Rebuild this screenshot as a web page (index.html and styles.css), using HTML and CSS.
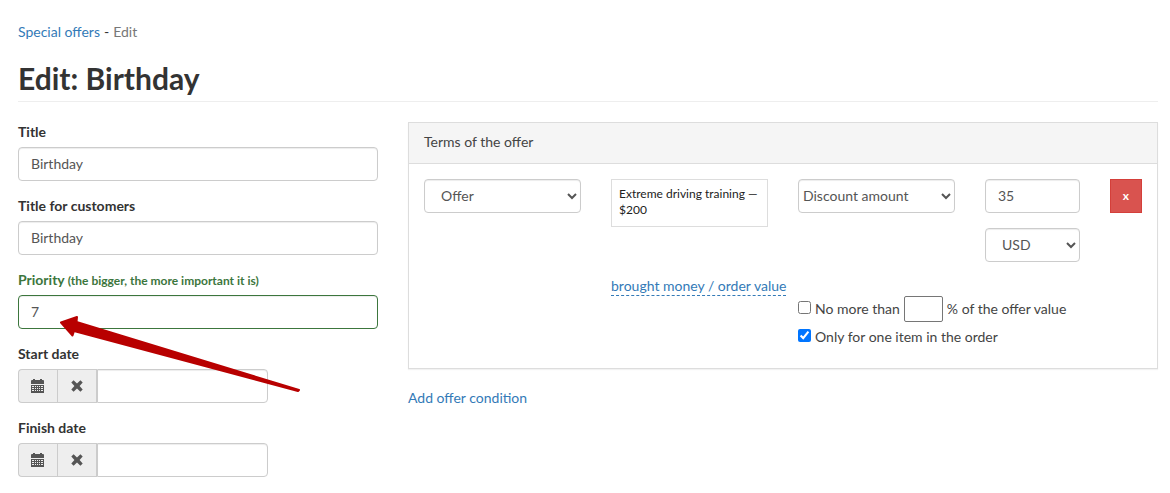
FILE: index.html
```html
<!DOCTYPE html>
<html lang="en">
<head>
  <meta charset="UTF-8">
  <meta name="viewport" content="width=device-width, initial-scale=1.0">
  <title>Edit: Birthday</title>
  <link rel="stylesheet" href="styles.css">
</head>
<body>
  <!-- Icons -->
  <svg class="sprite" xmlns="http://www.w3.org/2000/svg">
    <symbol id="icon-calendar" viewBox="0 0 14 14">
      <path d="M0 5V2q0-1 1-1h1V0h2v1h5V0h2v1h1q1 0 1 1v3z" />
      <path fill-rule="evenodd" d="M0 6h13v8H0zM1 7v1h2V7zM4 7v1h1V7zM6 7v1h1V7zM8 7v1h1V7zM10 7v1h2V7zM1 9v1h2V9zM4 9v1h1V9zM6 9v1h1V9zM8 9v1h1V9zM10 9v1h2V9zM1 11v1h2v-1zM4 11v1h1v-1zM6 11v1h1v-1zM8 11v1h1v-1zM10 11v1h2v-1z" />
    </symbol>
    <symbol id="icon-remove" viewBox="-1 -1 14 14">
      <path d="M2.6 0.3L6 3.4L9.4 0.3L11.7 2.6L8.6 6L11.7 9.4L9.4 11.7L6 8.6L2.6 11.7L0.3 9.4L3.4 6L0.3 2.6z" />
    </symbol>
  </svg>

  <nav class="breadcrumbs">
    <a href="#">Special offers</a>
    <span>-</span>
    <span class="current">Edit</span>
  </nav>
  <h1>Edit: Birthday</h1>

  <form class="row">
    <div class="col-4">
      <div class="form-group">
        <label for="title">Title</label>
        <input type="text" id="title" class="form-control" value="Birthday">
      </div>
      <div class="form-group">
        <label for="public-title">Title for customers</label>
        <input type="text" id="public-title" class="form-control" value="Birthday">
      </div>
      <div class="form-group has-success">
        <label for="priority">Priority <small>(the bigger, the more important it is)</small></label>
        <input type="text" id="priority" class="form-control" value="7">
        <svg class="pointer" viewBox="0 0 246 80" xmlns="http://www.w3.org/2000/svg">
          <path d="M2 8.5L18 3L17.5 8L240 76L239 77L15 17L13.5 21.5z" />
        </svg>
      </div>
      <div class="form-group">
        <label for="start-date">Start date</label>
        <div class="input-group">
          <button type="button" class="addon" aria-label="Pick start date"><svg class="icon"><use href="#icon-calendar" /></svg></button>
          <button type="button" class="addon" aria-label="Clear start date"><svg class="icon"><use href="#icon-remove" /></svg></button>
          <input type="text" id="start-date" class="form-control">
        </div>
      </div>
      <div class="form-group">
        <label for="finish-date">Finish date</label>
        <div class="input-group">
          <button type="button" class="addon" aria-label="Pick finish date"><svg class="icon"><use href="#icon-calendar" /></svg></button>
          <button type="button" class="addon" aria-label="Clear finish date"><svg class="icon"><use href="#icon-remove" /></svg></button>
          <input type="text" id="finish-date" class="form-control">
        </div>
      </div>
    </div>

    <div class="col-8">
      <div class="panel">
        <div class="panel-heading">Terms of the offer</div>
        <div class="panel-body">
          <div class="row">
            <div class="col-3">
              <select class="form-control" aria-label="Condition type">
                <option>Offer</option>
              </select>
            </div>
            <div class="col-3">
              <div class="offer-box">Extreme driving training — $200</div>
            </div>
            <div class="col-3">
              <select class="form-control select-flat" aria-label="Discount type">
                <option>Discount amount</option>
              </select>
            </div>
            <div class="col-2 stack">
              <input type="text" class="form-control" value="35" aria-label="Discount value">
              <select class="form-control" aria-label="Currency">
                <option>USD</option>
              </select>
            </div>
            <div class="col-1">
              <button type="button" class="btn-danger">x</button>
            </div>
          </div>
          <div class="row limits">
            <div class="col-3"></div>
            <div class="col-3">
              <a href="#" class="dashed">brought money / order value</a>
            </div>
            <div class="col-6">
              <div class="checks">
                <div class="check">
                  <input type="checkbox" id="limit">
                  <label for="limit">No more than</label>
                  <input type="text" id="percent" class="percent" aria-label="Percent">
                  <label for="percent">% of the offer value</label>
                </div>
                <div class="check">
                  <input type="checkbox" id="single" checked>
                  <label for="single">Only for one item in the order</label>
                </div>
              </div>
            </div>
          </div>
        </div>
      </div>
      <a href="#">Add offer condition</a>
    </div>
  </form>
</body>
</html>
```
FILE: styles.css
```css
* {
  box-sizing: border-box;
}

body {
  margin: 0;
  padding: 22px 12px 0 18px;
  font-family: Lato, "Liberation Sans", sans-serif;
  font-size: 14px;
  line-height: 20px;
  color: #333;
  background: #fff;
}

input,
select,
button {
  font-family: inherit;
  font-size: inherit;
  line-height: inherit;
}

a {
  color: #337ab7;
  text-decoration: none;
}

h1 {
  margin: 19px 0 20px;
  padding-bottom: 6px;
  border-bottom: 1px solid #eee;
  font-size: 30px;
  line-height: 34px;
  font-weight: 700;
}

.sprite {
  display: none;
}

.breadcrumbs {
  display: flex;
  gap: 4px;
}

.current {
  color: #777;
}

/* Grid */
.row {
  display: flex;
  margin: 0 -15px;
}

.row > div {
  padding: 0 15px;
  min-width: 0;
}

.col-1 { flex: 0 0 calc(100% / 12); }
.col-2 { flex: 0 0 calc(100% / 6); }
.col-3 { flex: 0 0 25%; }
.col-4 { flex: 0 0 calc(100% / 3); }
.col-6 { flex: 0 0 50%; }
.col-8 { flex: 0 0 calc(200% / 3); }

/* Form */
.form-group {
  position: relative;
  margin-bottom: 15px;
}

.form-group label {
  display: block;
  height: 20px;
  margin-bottom: 5px;
  font-weight: 700;
}

.form-group small {
  font-size: 12px;
  line-height: 1;
}

.form-control {
  display: block;
  width: 100%;
  height: 34px;
  padding: 5px 12px 7px;
  color: #555;
  background-color: #fff;
  border: 1px solid #ccc;
  border-radius: 4px;
  box-shadow: inset 0 1px 1px rgba(0, 0, 0, 0.075);
}

.select-flat {
  padding-left: 0;
  padding-right: 0;
}

.has-success label {
  color: #3c763d;
}

.has-success .form-control {
  border-color: #3c763d;
}

.input-group {
  display: flex;
  width: 250px;
}

.input-group .form-control {
  flex: 1;
  min-width: 0;
  border-radius: 0 4px 4px 0;
}

.addon {
  height: 34px;
  padding: 0 12px;
  color: #555;
  background: #eee;
  border: 1px solid #ccc;
  border-right: 0;
}

.addon:first-child {
  border-radius: 4px 0 0 4px;
}

.addon + .addon {
  border-right: 1px solid #ccc;
}

.icon {
  display: block;
  width: 14px;
  height: 14px;
  fill: currentColor;
}

/* Red arrow over the priority field */
.pointer {
  position: absolute;
  z-index: 1;
  left: 41px;
  top: 44px;
  width: 246px;
  height: 80px;
  fill: #b80000;
  stroke: #b80000;
  stroke-width: 2;
  stroke-linejoin: round;
  pointer-events: none;
}

/* Panel */
.panel {
  margin-bottom: 19px;
  color: #444;
  border: 1px solid #ddd;
  box-shadow: 0 1px 1px rgba(0, 0, 0, 0.05);
}

.panel-heading {
  padding: 9px 15px 11px;
  background: #f5f5f5;
  border-bottom: 1px solid #ddd;
}

.panel-body {
  padding: 15px;
}

.offer-box {
  min-height: 48px;
  padding: 6px 7px;
  color: #222;
  border: 1px solid #ddd;
  font-size: 12px;
  line-height: 16px;
}

.stack {
  display: flex;
  flex-direction: column;
  gap: 15px;
}

.btn-danger {
  display: block;
  width: 100%;
  height: 34px;
  padding: 0;
  color: #fff;
  background: #d9534f;
  border: 1px solid #d43f3a;
  font-size: 12px;
  font-weight: 700;
}

.limits {
  margin-top: 14px;
}

.dashed {
  display: inline-block;
  line-height: 18px;
  border-bottom: 1px dashed #337ab7;
  white-space: nowrap;
}

.checks {
  padding: 19px 0 2px;
}

.check {
  display: flex;
  align-items: center;
  gap: 4px;
  height: 28px;
  white-space: nowrap;
}

.check input[type="checkbox"] {
  width: 13px;
  height: 13px;
  margin: 0 0 3px;
}

.percent {
  width: 39px;
  height: 26px;
  padding: 1px 2px;
  border: 1px solid #767676;
  border-radius: 2px;
}
```
